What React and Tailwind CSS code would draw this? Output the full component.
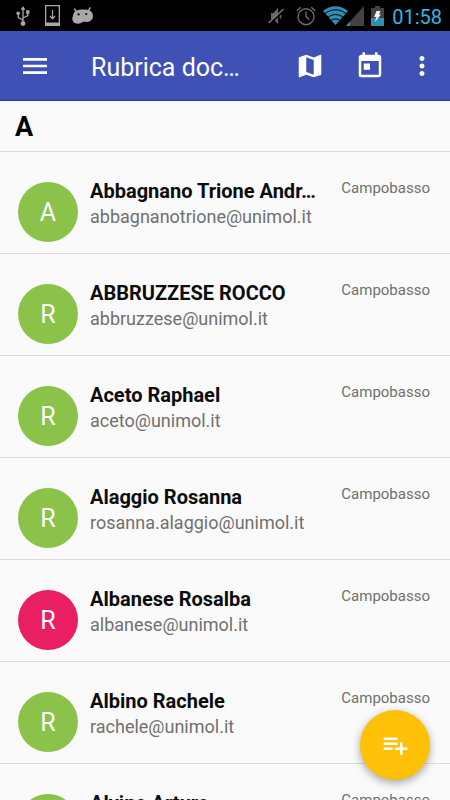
import { MdMap, MdMenu, MdMoreVert, MdPlaylistAdd, MdToday } from "react-icons/md";

const contacts = [
  { name: "Abbagnano Trione Andr…", email: "abbagnanotrione@unimol.it", initial: "A", color: "bg-[#8bc34a]" },
  { name: "ABBRUZZESE ROCCO", email: "abbruzzese@unimol.it", initial: "R", color: "bg-[#8bc34a]" },
  { name: "Aceto Raphael", email: "aceto@unimol.it", initial: "R", color: "bg-[#8bc34a]" },
  { name: "Alaggio Rosanna", email: "rosanna.alaggio@unimol.it", initial: "R", color: "bg-[#8bc34a]" },
  { name: "Albanese Rosalba", email: "albanese@unimol.it", initial: "R", color: "bg-[#e91e63]" },
  { name: "Albino Rachele", email: "rachele@unimol.it", initial: "R", color: "bg-[#8bc34a]" },
  { name: "Alvino Arturo", email: "alvino@unimol.it", initial: "A", color: "bg-[#8bc34a]" },
];

function UsbIcon() {
  return (
    <svg className="h-5 w-[14px]" viewBox="0 0 14 20" fill="none" stroke="#a8a8a8" strokeWidth="1.3">
      <path d="M7 3v14M7 14 2.200 11.500V7.500M7 12l4.800-2.500V6.500" />
      <path d="M7 0 4.600 3.800h4.800z" fill="#a8a8a8" stroke="none" />
      <circle cx="7" cy="17.500" r="2.400" fill="#a8a8a8" stroke="none" />
      <circle cx="2.200" cy="7.200" r="1.800" fill="#a8a8a8" stroke="none" />
      <path d="M10.100 4.300h3.400v3.400h-3.400z" fill="#a8a8a8" stroke="none" />
    </svg>
  );
}

function DownloadIcon() {
  return (
    <svg className="h-[21px] w-[15px]" viewBox="0 0 15 21" fill="none" stroke="#a8a8a8">
      <path d="M.6.6h13.800v19.800H.6z" strokeWidth="1.400" />
      <path d="M0 17.500h15V21H0z" fill="#a8a8a8" stroke="none" />
      <path d="M7.500 5v8.500M5 11l2.500 2.800L10 11" strokeWidth="1.200" />
    </svg>
  );
}

function DroidIcon() {
  return (
    <svg className="h-[18px] w-[22px]" viewBox="0 0 22 18" fill="#a8a8a8">
      <path d="M2.600 2 4.600 5M18 .9 16.400 4" stroke="#a8a8a8" strokeWidth="1.500" strokeLinecap="round" />
      <path d="M3.200 4.600C6 2.400 9.500 2.600 12 2.600c3.600-.2 6.600.8 8 3 1.600 2.600 1.200 6-1 8-1.800 1.600-4.600 1.600-6.600.8-1.200 0-2 .8-3 1.400-2.600 1.400-6.200 1.200-8-.8-1.600-2-1.200-4.400-.4-6 .2-1.800.6-3.200 2.200-4.400z" />
      <circle cx="6.600" cy="7.400" r="1.100" fill="#000" />
      <circle cx="14.200" cy="7" r="1.100" fill="#000" />
    </svg>
  );
}

function MutedIcon() {
  return (
    <svg className="h-[18px] w-4" viewBox="0 0 16 18">
      <path d="M3 6h2.500L10 .8v16.400L5.500 12H3z" fill="#666" />
      <path d="M12 6.500c1 1.500 1 3.500 0 5" fill="none" stroke="#666" strokeWidth="1.400" />
      <path d="M1.400 17.400 16 3.600" stroke="#000" strokeWidth="1.600" />
      <path d="M.5 16 15.500 2" stroke="#777" strokeWidth="1.500" />
    </svg>
  );
}

function AlarmIcon() {
  return (
    <svg className="h-5 w-5" viewBox="0 0 20 20" fill="none" stroke="#6c6c6c" strokeWidth="1.400">
      <circle cx="10" cy="10.700" r="8" />
      <path d="M10 5.500v5.300l3.300 3M.8 4.800 4.800 1.200M15.200 1.200l4 3.600" />
    </svg>
  );
}

function WifiIcon() {
  return (
    <svg className="h-[19px] w-[25px]" viewBox="0 0 25 19">
      <path d="M0 5C7-1.500 18-1.500 25 5L12.500 19z" fill="#2f8fb3" />
      <g fill="none" stroke="#000" strokeWidth="1">
        <path d="M1.500 8c6.500-5.600 15.500-5.600 22 0" />
        <path d="M4.500 11.600c4.800-4 11.200-4 16 0" />
        <path d="M7.500 14.800c3-2.400 7-2.400 10 0" />
      </g>
    </svg>
  );
}

function SignalIcon() {
  return (
    <svg className="h-5 w-[18px]" viewBox="0 0 18 20">
      <path d="M18 0v20H0z" fill="#424242" />
      <path d="M4 15.600V20H0z" fill="#2f8fb3" />
    </svg>
  );
}

function BatteryIcon() {
  return (
    <svg className="h-5 w-[13px]" viewBox="0 0 13 20">
      <path d="M4 0h5v2h4v18H0V2h4z" fill="#424242" />
      <path d="M0 12h13v8H0z" fill="#2f8fb3" />
      <path d="M5.500 5h4L8 8.500h2L4 16l1.300-5H3z" fill="#f4f4f4" />
    </svg>
  );
}

function StatusBar() {
  return (
    <div className="flex h-[31px] items-center justify-between bg-black pr-2 pl-4">
      <div className="flex items-center gap-3">
        <UsbIcon />
        <div className="ml-[3px]"><DownloadIcon /></div>
        <DroidIcon />
      </div>
      <div className="flex items-center">
        <MutedIcon />
        <div className="ml-3"><AlarmIcon /></div>
        <div className="ml-[7px]"><WifiIcon /></div>
        <div className="-ml-0.5"><SignalIcon /></div>
        <div className="ml-[7px]"><BatteryIcon /></div>
        <time className="ml-2 pt-0.5 text-[20px] leading-7 text-[#33b5e5]">01:58</time>
      </div>
    </div>
  );
}

function AppBar() {
  return (
    <header className="flex h-[70px] items-center border-b border-[#1f3bb0] bg-[#3f51b5] pr-[13px] pl-[19px] text-white">
      <button type="button" aria-label="Menu" className="text-[32px]">
        <MdMenu />
      </button>
      <h1 className="ml-10 min-w-0 flex-1 truncate pt-1 text-[25px] leading-8">Rubrica doc…</h1>
      <button type="button" aria-label="Mappa" className="text-[30px]">
        <MdMap />
      </button>
      <button type="button" aria-label="Calendario" className="ml-[30px] text-[30px]">
        <MdToday />
      </button>
      <button type="button" aria-label="Altro" className="ml-[22px] text-[30px]">
        <MdMoreVert />
      </button>
    </header>
  );
}

function ContactRow({ contact }) {
  return (
    <li className="flex h-[102px] items-start border-b border-[#dcdcdc] pr-5 pl-[18px]">
      <div className={`mt-[30px] flex size-[60px] shrink-0 items-center justify-center rounded-full pt-0.5 text-[25px] leading-8 text-white ${contact.color}`}>
        {contact.initial}
      </div>
      <div className="mt-[26px] ml-3 min-w-0 flex-1">
        <h3 className="truncate text-[20px] leading-[26px] font-bold text-[#0c0c0c]">{contact.name}</h3>
        <p className="truncate text-[18px] leading-[26px] text-[#707070]">{contact.email}</p>
      </div>
      <span className="mt-[26px] ml-5 text-[15px] leading-5 text-[#707070]">Campobasso</span>
    </li>
  );
}

export default function App() {
  return (
    <div className="relative h-screen overflow-hidden bg-[#fafafa] font-['Roboto',sans-serif]">
      <StatusBar />
      <AppBar />
      <main>
        <h2 className="border-b border-[#dcdcdc] px-[15px] pt-[10px] pb-2 text-[27px] leading-8 font-bold text-black">A</h2>
        <ul>
          {contacts.map((contact) => (
            <ContactRow key={contact.email} contact={contact} />
          ))}
        </ul>
      </main>
      <button
        type="button"
        aria-label="Aggiungi"
        className="absolute right-5 bottom-5 flex size-[70px] items-center justify-center rounded-full bg-[#ffc107] text-[30px] text-white shadow-[0_3px_8px_rgba(0,0,0,0.35)]"
      >
        <MdPlaylistAdd />
      </button>
    </div>
  );
}
